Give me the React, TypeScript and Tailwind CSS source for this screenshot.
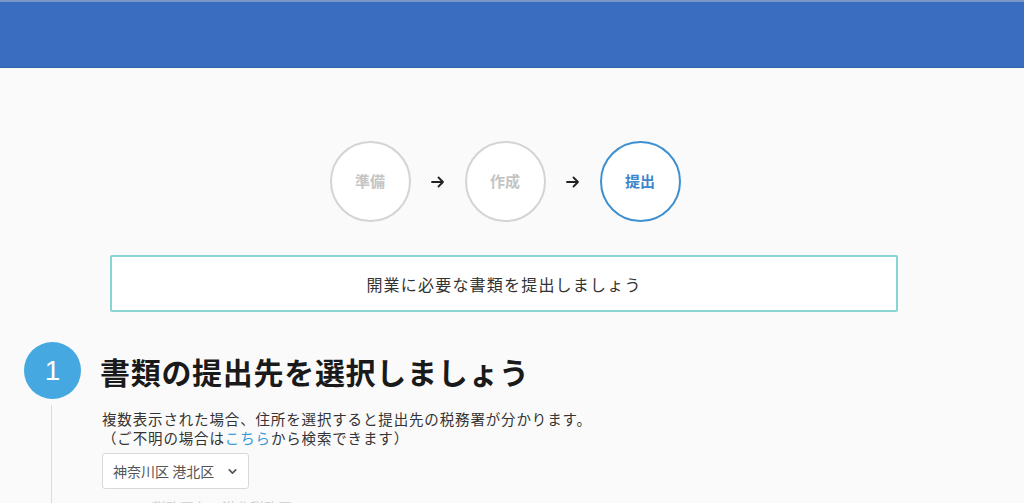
import { ChevronDown } from 'lucide-react';

const font = { fontFamily: '"Noto Sans CJK JP", "Noto Sans", sans-serif' };

function StepCircle({ label, active }: { label: string; active?: boolean }) {
  return (
    <div
      className={
        active
          ? 'w-[81px] h-[81px] rounded-full border-2 border-[#3f90d0] bg-white flex items-center justify-center text-[15px] font-bold text-[#3d86c9]'
          : 'w-[81px] h-[81px] rounded-full border-2 border-[#d4d4d4] bg-white flex items-center justify-center text-[15px] font-bold text-[#c4c4c4]'
      }
    >
      {label}
    </div>
  );
}

function Arrow() {
  return (
    <svg width="14" height="12" viewBox="0 0 14 12" className="mx-[20px]">
      <path d="M1 6h11M7.5 1.5L12 6l-4.5 4.5" fill="none" stroke="#222" strokeWidth="1.8" strokeLinecap="round" strokeLinejoin="round" />
    </svg>
  );
}

export default function App() {
  return (
    <div className="w-[1024px] h-[503px] overflow-hidden bg-[#fafafa] text-[#222]" style={font}>
      {/* ヘッダー */}
      <div className="h-[68px] bg-[#3a6dbf] border-t-2 border-[#7b97c9] border-b border-b-[#3563ad]"></div>

      {/* ステップ */}
      <div className="flex items-center justify-center pt-[73px] mr-[14px]">
        <StepCircle label="準備" />
        <Arrow />
        <StepCircle label="作成" />
        <Arrow />
        <StepCircle label="提出" active />
      </div>

      {/* 案内ボックス */}
      <div className="ml-[110px] w-[788px] mt-[33px] h-[57px] bg-white border-2 border-[#8ad3d3] rounded-[2px] flex items-center justify-center text-[16px] tracking-[1.2px] text-[#333]">
        開業に必要な書類を提出しましょう
      </div>

      {/* セクション1 */}
      <div className="mt-[30px] ml-[24px]">
        <div className="flex items-center">
          <div className="w-[57px] h-[57px] rounded-full bg-[#45a8e0] text-white flex items-center justify-center text-[28px] font-light" style={{ fontFamily: '"Liberation Sans", Arial, sans-serif' }}>
            1
          </div>
          <h2 className="ml-[19px] text-[30px] font-bold leading-none tracking-[0.7px] text-[#1a1a1a]">書類の提出先を選択しましょう</h2>
        </div>
        <div className="flex">
          <div className="w-[28px] border-r border-[#dcdcdc] h-[120px] mt-[6px]"></div>
          <div className="ml-[50px] pt-[10px] text-[#333]">
            <p className="text-[14.5px] leading-[19px] tracking-[0.85px]">複数表示された場合、住所を選択すると提出先の税務署が分かります。</p>
            <p className="text-[14.5px] leading-[19px] tracking-[0.85px]">
              （ご不明の場合は<span className="text-[#3a9ad9]">こちら</span>から検索できます）
            </p>
            <div className="mt-[6px] w-[147px] h-[36px] bg-white border border-[#d9d9d9] rounded-[3px] flex items-center justify-between pl-[10px] pr-[9px] text-[14px] text-[#555]">
              <span>神奈川区 港北区</span>
              <ChevronDown size={13} strokeWidth={3} className="text-[#555]" />
            </div>
            <p className="mt-[8px] ml-[50px] text-[14px] text-[#d0d0d0]">税務署名：港北税務署</p>
          </div>
        </div>
      </div>
    </div>
  );
}
